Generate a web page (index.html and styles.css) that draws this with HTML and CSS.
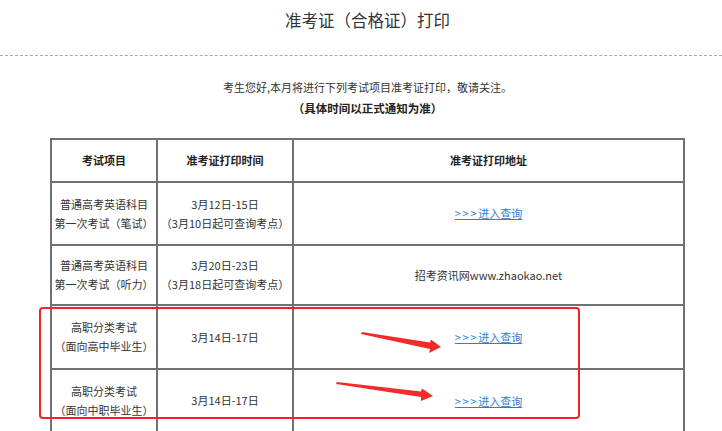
FILE: index.html
```html
<!DOCTYPE html>
<html lang="zh-CN">
<head>
    <meta charset="UTF-8">
    <meta name="viewport" content="width=device-width, initial-scale=1.0">
    <title>准考证（合格证）打印</title>
    <link rel="stylesheet" href="styles.css">
</head>
<body>
    <div class="page-head">
        <h1>准考证（合格证）打印</h1>
    </div>

    <div class="content">
        <p class="notice">考生您好,本月将进行下列考试项目准考证打印，敬请关注。</p>
        <p class="tip">（具体时间以正式通知为准）</p>

        <table class="exam-table">
            <colgroup>
                <col class="col-name">
                <col class="col-time">
                <col class="col-addr">
            </colgroup>
            <tr class="row-head">
                <th>考试项目</th>
                <th>准考证打印时间</th>
                <th>准考证打印地址</th>
            </tr>
            <tr class="row-1">
                <td>普通高考英语科目<br>第一次考试（笔试）</td>
                <td>3月12日-15日<br>（3月10日起可查询考点）</td>
                <td><a href="#"><span class="gt">&gt;&gt;&gt;</span>进入查询</a></td>
            </tr>
            <tr class="row-2">
                <td>普通高考英语科目<br>第一次考试（听力）</td>
                <td>3月20日-23日<br>（3月18日起可查询考点）</td>
                <td class="site">招考资讯网www.zhaokao.net</td>
            </tr>
            <tr class="row-3">
                <td>高职分类考试<br>（面向高中毕业生）</td>
                <td>3月14日-17日</td>
                <td><a href="#"><span class="gt">&gt;&gt;&gt;</span>进入查询</a></td>
            </tr>
            <tr class="row-4">
                <td>高职分类考试<br>（面向中职毕业生）</td>
                <td>3月14日-17日</td>
                <td><a href="#" class="low"><span class="gt">&gt;&gt;&gt;</span>进入查询</a></td>
            </tr>
            <tr class="row-5">
                <td>&nbsp;</td>
                <td>&nbsp;</td>
                <td>&nbsp;</td>
            </tr>
        </table>
    </div>

    <!-- 标注：红框和箭头 -->
    <div class="mark-box"></div>
    <svg class="mark-arrows" width="722" height="431" viewBox="0 0 722 431">
        <polygon points="362,332 430,342.5 431,339.5 441,347 429,353 430,349 361,334" fill="#f22a2a"/>
        <polygon points="337,382 421,391.5 422,388.5 433,396 421,401 421,397 336,384" fill="#f22a2a"/>
    </svg>
</body>
</html>
```

FILE: styles.css
```css
body {
    margin: 0;
    padding: 0;
    background: #fff;
    color: #333;
    font-family: "Noto Sans CJK SC", "Noto Sans", sans-serif;
    font-size: 11px;
}
.page-head {
    height: 55px;
    border-bottom: 1px dashed #aaa;
}
.page-head h1 {
    margin: 0;
    padding: 9px 0 0 51px;
    width: 633px;
    text-align: center;
    font-size: 16.5px;
    font-weight: normal;
    line-height: 22px;
    color: #333;
}
.content {
    width: 635px;
    margin-left: 50px;
}
.notice {
    margin: 21px 0 0;
    line-height: 20px;
    text-align: center;
}
.tip {
    margin: 1px 0 0;
    line-height: 20px;
    text-align: center;
    font-weight: bold;
    font-size: 11.5px;
    color: #222;
}
.exam-table {
    margin-top: 20px;
    width: 635px;
    border-collapse: collapse;
    table-layout: fixed;
}
.col-name {
    width: 106px;
}
.col-time {
    width: 136px;
}
.exam-table th,
.exam-table td {
    border: 2px solid #717171;
    padding: 0;
    text-align: center;
    vertical-align: middle;
    line-height: 19px;
}
.exam-table th {
    font-weight: bold;
    color: #222;
}
.row-head {
    height: 43px;
}
.row-1 {
    height: 63px;
}
.row-2 {
    height: 60px;
}
.row-3 {
    height: 64px;
}
.row-4 {
    height: 63px;
}
.row-5 {
    height: 60px;
}
.exam-table a {
    color: #2f7dd3;
    text-decoration: underline;
}
.exam-table a .gt {
    letter-spacing: 1.7px;
}
.exam-table a.low {
    position: relative;
    top: 1px;
}
.site {
    color: #333;
}
.mark-box {
    position: absolute;
    left: 39px;
    top: 307px;
    width: 537px;
    height: 108px;
    border: 2.5px solid #f02424;
    border-radius: 4px;
}
.mark-arrows {
    position: absolute;
    left: 0;
    top: 0;
}
```
